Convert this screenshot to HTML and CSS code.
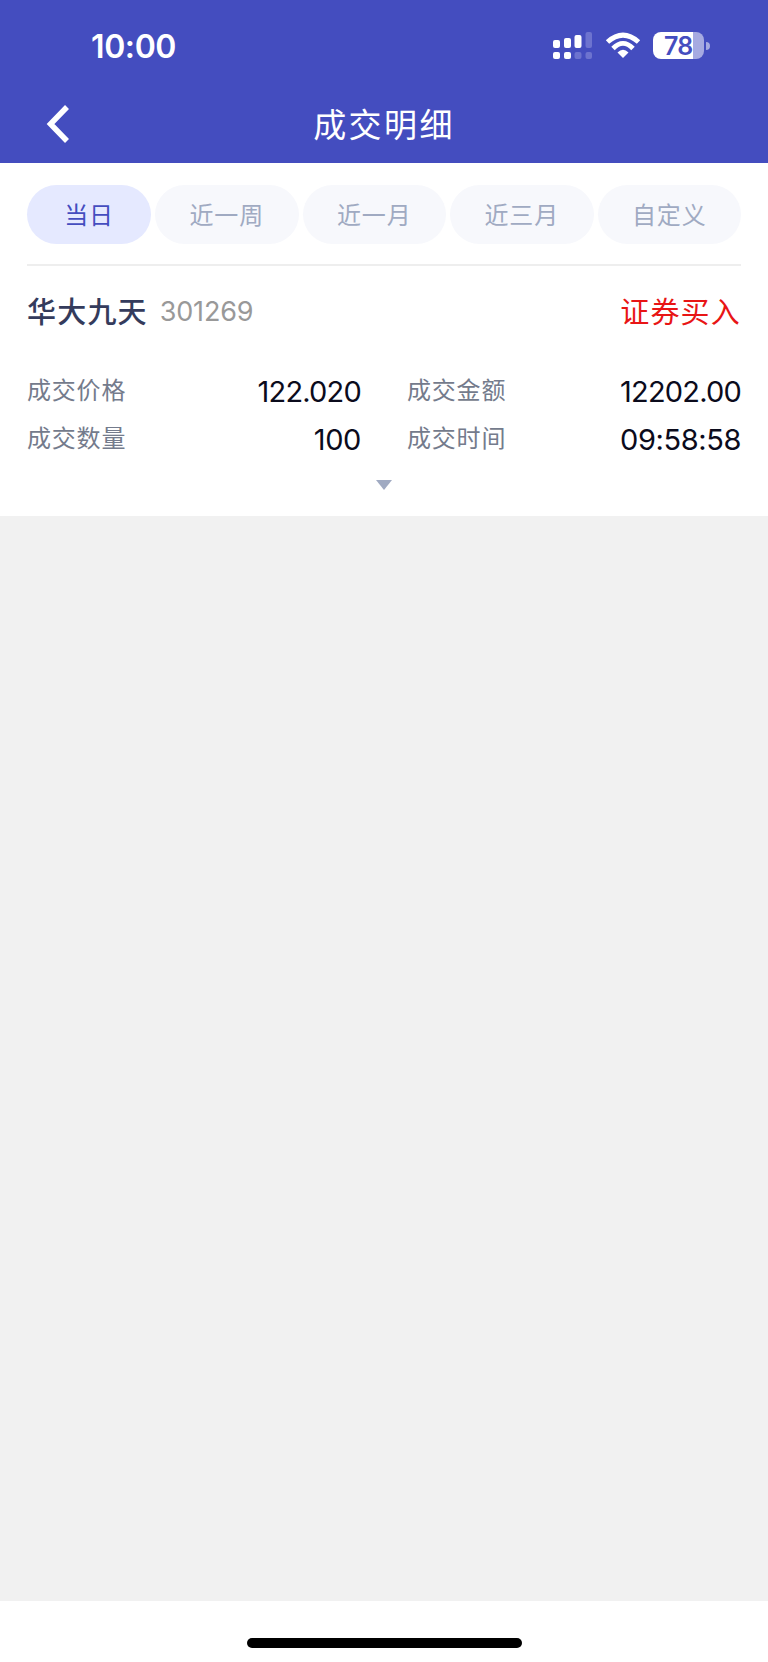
FILE: index.html
```html
<!DOCTYPE html>
<html lang="zh-CN">
<head>
  <meta charset="UTF-8">
  <meta name="viewport" content="width=device-width, initial-scale=1.0">
  <title>成交明细</title>
  <link rel="stylesheet" href="styles.css">
</head>
<body>
  <div class="page">
    <header class="header">
      <div class="status-bar">
        <span class="time">10:00</span>
        <div class="status-icons">
          <svg class="signal" width="40" height="27" viewBox="0 0 40 27">
            <g fill="#fff">
              <rect x="0" y="8" width="7" height="8" rx="2"/>
              <rect x="11" y="6" width="7" height="10" rx="2"/>
              <rect x="21.500" y="3" width="7" height="13" rx="2"/>
              <rect x="0" y="20" width="7" height="7" rx="2"/>
              <rect x="11" y="20" width="7" height="7" rx="2"/>
            </g>
            <g fill="#6d73cf">
              <rect x="32.500" y="0" width="6.500" height="16" rx="2"/>
              <rect x="21.500" y="20" width="7" height="7" rx="2"/>
              <rect x="32.500" y="20" width="6.500" height="7" rx="2"/>
            </g>
          </svg>
          <svg class="wifi" width="36" height="27" viewBox="0 0 36 27">
            <path fill="#fff" d="M18 26 L12.500 20.400 Q18 15.200 23.500 20.400 Z"/>
            <path fill="none" stroke="#fff" stroke-width="4.800" d="M8 16.500 Q18 6.200 28 16.500"/>
            <path fill="none" stroke="#fff" stroke-width="5" d="M2.500 10 Q18 -3.800 33.500 10"/>
          </svg>
          <div class="battery">
            <div class="battery-body"><span>78</span></div>
            <div class="battery-cap"></div>
          </div>
        </div>
      </div>
      <div class="nav-bar">
        <a href="#" class="back">
          <svg width="24" height="40" viewBox="0 0 24 40">
            <path fill="none" stroke="#fff" stroke-width="5.500" d="M21 3 L4.500 20 L21 37"/>
          </svg>
        </a>
        <h1>成交明细</h1>
      </div>
    </header>

    <section class="content">
      <nav class="tabs">
        <a href="#" class="tab active">当日</a>
        <a href="#" class="tab">近一周</a>
        <a href="#" class="tab">近一月</a>
        <a href="#" class="tab">近三月</a>
        <a href="#" class="tab">自定义</a>
      </nav>

      <div class="record">
        <div class="record-head">
          <span class="stock-name">华大九天</span>
          <span class="stock-code">301269</span>
          <span class="trade-type">证券买入</span>
        </div>
        <div class="record-grid">
          <div class="item"><span class="label">成交价格</span><span class="value amount">122.020</span></div>
          <div class="item"><span class="label">成交金额</span><span class="value amount">12202.00</span></div>
          <div class="item"><span class="label">成交数量</span><span class="value">100</span></div>
          <div class="item"><span class="label">成交时间</span><span class="value">09:58:58</span></div>
        </div>
        <div class="arrow"></div>
      </div>
    </section>

    <footer class="footer">
      <div class="home-bar"></div>
    </footer>
  </div>
</body>
</html>
```
FILE: styles.css
```css
* {
  box-sizing: border-box;
}

body {
  margin: 0;
  font-family: 'Inter', 'Noto Sans CJK SC', sans-serif;
  background-color: #f1f1f1;
}

a {
  text-decoration: none;
}

.page {
  display: flex;
  flex-direction: column;
  min-height: 1662px;
}

/* Header */
.header {
  height: 163px;
  background-color: #444dbf;
  color: #fff;
}

.status-bar {
  display: flex;
  justify-content: space-between;
  align-items: center;
  height: 91px;
  padding: 0 58px 0 91px;
}

.time {
  padding-top: 2px;
  font-size: 32px;
  font-weight: 600;
  letter-spacing: -0.4px;
}

.status-icons {
  display: flex;
  align-items: center;
}

.signal {
  margin-right: 12px;
}

.wifi {
  margin-right: 12px;
}

.battery {
  display: flex;
  align-items: center;
}

.battery-body {
  width: 51px;
  height: 27px;
  padding-left: 11px;
  border-radius: 8px;
  background: linear-gradient(to right, #fff 40px, #a6aae1 40px);
  color: #444dbf;
  font-size: 25px;
  font-weight: 600;
  line-height: 28px;
  letter-spacing: -0.8px;
}

.battery-cap {
  width: 4px;
  height: 8px;
  margin-left: 2px;
  border-radius: 0 4px 4px 0;
  background-color: #a6aae1;
}

.nav-bar {
  display: grid;
  grid-template-columns: 100px 1fr 100px;
  align-items: center;
  height: 66px;
}

.back {
  height: 40px;
  padding-left: 46px;
}

.nav-bar h1 {
  margin: 0;
  padding-top: 2px;
  text-align: center;
  font-size: 33px;
  font-weight: 400;
  line-height: 40px;
  letter-spacing: 2.4px;
}

/* Content */
.content {
  height: 353px;
  padding: 22px 27px 0;
  background-color: #fff;
}

.tabs {
  display: flex;
  gap: 4px;
  height: 81px;
  border-bottom: 2px solid #eee;
}

.tab {
  flex: 1;
  height: 59px;
  border-radius: 30px;
  background-color: #f7f8fc;
  color: #a0aac2;
  font-size: 24px;
  line-height: 61px;
  letter-spacing: 0.8px;
  text-align: center;
}

.tab.active {
  flex: 0 0 124px;
  background-color: #e5e9ff;
  color: #444dbf;
}

/* Record */
.record-head {
  display: flex;
  align-items: center;
  height: 88px;
}

.stock-name {
  color: #343b5c;
  font-size: 29px;
  font-weight: 500;
  letter-spacing: 1.2px;
}

.stock-code {
  margin-left: 12px;
  padding-top: 2px;
  color: #999;
  font-size: 27px;
  letter-spacing: -0.2px;
}

.trade-type {
  margin-left: auto;
  color: #e81515;
  font-size: 29px;
  letter-spacing: 1.2px;
}

.record-grid {
  display: grid;
  grid-template-columns: 334px 334px;
  column-gap: 46px;
  padding-top: 13px;
}

.item {
  display: flex;
  justify-content: space-between;
  height: 48px;
}

.label {
  color: #747b8c;
  font-size: 24px;
  line-height: 48px;
  letter-spacing: 0.8px;
}

.value {
  color: #0b0b1c;
  font-size: 29px;
  line-height: 50px;
  letter-spacing: -0.4px;
}

.value.amount {
  letter-spacing: -0.8px;
}

.arrow {
  width: 0;
  margin: 17px auto 0;
  border-left: 8px solid transparent;
  border-right: 8px solid transparent;
  border-top: 10px solid #a0aac2;
}

/* Footer */
.footer {
  height: 61px;
  margin-top: auto;
  padding-top: 37px;
  background-color: #fff;
}

.home-bar {
  width: 275px;
  height: 10px;
  margin: 0 auto;
  border-radius: 5px;
  background-color: #000;
}
```
